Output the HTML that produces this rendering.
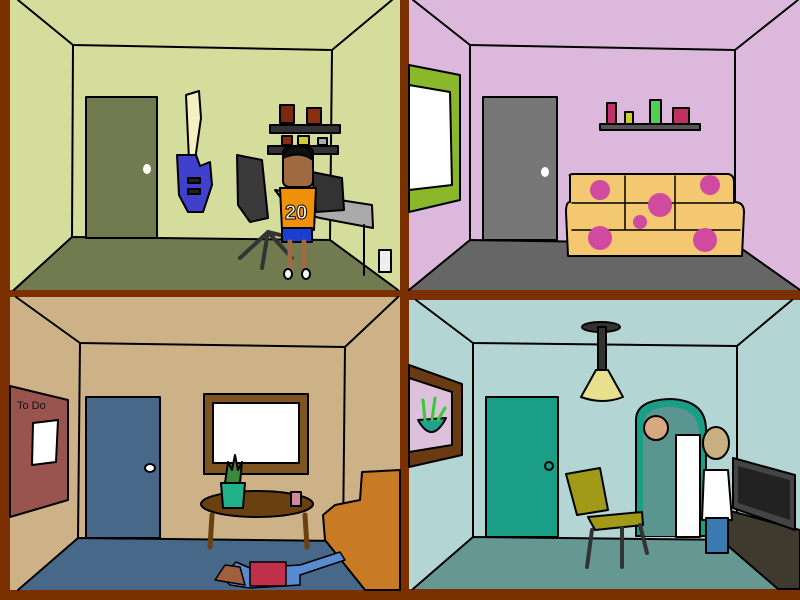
<!DOCTYPE html>
<html><head><style>html,body{margin:0;padding:0;background:#7a3000;}svg{display:block}</style></head><body>
<svg width="800" height="600" viewBox="0 0 800 600" xmlns="http://www.w3.org/2000/svg" stroke="#000" stroke-width="2" stroke-linejoin="round" stroke-linecap="round">
<rect width="800" height="600" fill="#7a3000" stroke="none"/>
<!-- TL -->
<g>
<rect x="10" y="0" width="390" height="290" fill="#d4dd9c" stroke="none"/>
<polygon points="72,237 332,240 398,290 12,290" fill="#727a4f" stroke="none"/>
<polyline points="18,0 73,45 332,50 392,0" fill="none"/>
<line x1="73" y1="45" x2="72" y2="237"/><line x1="332" y1="50" x2="330" y2="240"/>
<polyline points="14,290 72,237 330,240 398,290" fill="none"/>
<rect x="86" y="97" width="71" height="141" fill="#727a4f"/>
<ellipse cx="147" cy="169" rx="4" ry="5" fill="#fff" stroke="none"/>
<path d="M186 95 L199 91 L201 118 L195 160 L189 160 Z" fill="#f6f0c0"/>
<path d="M190 155 L196 155 L200 166 L210 162 L212 185 L203 212 L188 212 L179 195 L177 155 Z" fill="#4040cc"/>
<rect x="188" y="178" width="12" height="5" fill="#222"/><rect x="188" y="189" width="12" height="5" fill="#222"/>
<rect x="270" y="125" width="70" height="8" fill="#333"/><rect x="268" y="146" width="70" height="8" fill="#333"/>
<rect x="280" y="105" width="14" height="18" fill="#7a2a10"/><rect x="307" y="108" width="14" height="16" fill="#8a3010"/>
<rect x="282" y="136" width="10" height="9" fill="#8a2a10"/><rect x="298" y="136" width="11" height="9" fill="#cc3"/><rect x="318" y="138" width="9" height="7" fill="#aaa"/>
<path d="M237 155 L262 160 L268 218 L250 222 L238 205 Z" fill="#3a3a3a"/>
<path d="M268 232 L240 258 M268 232 L292 258 M268 232 L262 268 M268 232 L300 240" stroke="#333" stroke-width="4"/>
<path d="M275 190 L372 205 L373 228 L320 218 L290 210 Z" fill="#aaa"/>
<path d="M312 172 L342 178 L344 210 L316 212 Z" fill="#333"/>
<line x1="364" y1="225" x2="364" y2="275"/>
<rect x="379" y="250" width="12" height="22" fill="#eee"/>
<rect x="283" y="147" width="30" height="40" rx="6" fill="#a06a40"/>
<path d="M283 158 Q286 145 298 146 Q312 146 313 160 Q300 150 283 158Z" fill="#111"/>
<path d="M280 188 L316 188 L314 230 L282 230 Z" fill="#f0900a"/>
<text x="285" y="219" font-family="Liberation Sans,sans-serif" font-size="20" font-weight="bold" fill="#fff" stroke="#000" stroke-width="1">20</text>
<rect x="282" y="228" width="30" height="14" fill="#1a3fd0"/>
<line x1="290" y1="242" x2="290" y2="272" stroke="#a06a40" stroke-width="5"/><line x1="304" y1="242" x2="304" y2="272" stroke="#a06a40" stroke-width="5"/>
<ellipse cx="288" cy="274" rx="4" ry="5" fill="#fff"/><ellipse cx="306" cy="274" rx="4" ry="5" fill="#fff"/>
</g>
<!-- TR -->
<g>
<rect x="409" y="0" width="391" height="290" fill="#dcb8dc" stroke="none"/>
<polygon points="470,240 735,244 798,290 409,290" fill="#666" stroke="none"/>
<polyline points="413,0 470,45 735,50 798,0" fill="none"/>
<line x1="470" y1="45" x2="470" y2="240"/><line x1="735" y1="50" x2="735" y2="244"/>
<polyline points="409,290 470,240 735,244 800,290" fill="none"/>
<path d="M409 65 L460 75 L460 200 L409 212 Z" fill="#8ab82a"/>
<path d="M409 85 L450 92 L452 185 L409 190 Z" fill="#fff"/>
<rect x="483" y="97" width="74" height="143" fill="#777"/>
<ellipse cx="545" cy="172" rx="4" ry="5" fill="#fff" stroke="none"/>
<rect x="600" y="124" width="100" height="6" fill="#555"/>
<rect x="607" y="103" width="9" height="21" fill="#c0306a"/><rect x="625" y="112" width="8" height="12" fill="#cc3"/><rect x="650" y="100" width="11" height="24" fill="#5c5"/><rect x="673" y="108" width="16" height="16" fill="#c03060"/>
<path d="M570 176 Q568 174 575 174 L728 174 Q734 175 734 182 L734 202 Q744 202 744 212 L742 256 L568 256 L566 212 Q566 202 570 202 Z" fill="#f3c870"/>
<path d="M572 203 L734 203 M572 230 L740 230 M625 176 L625 230 M675 176 L675 230" fill="none" stroke-width="1.5"/>
<circle cx="600" cy="190" r="10" fill="#d04aa0" stroke="none"/><circle cx="660" cy="205" r="12" fill="#d04aa0" stroke="none"/><circle cx="710" cy="185" r="10" fill="#d04aa0" stroke="none"/><circle cx="600" cy="238" r="12" fill="#d04aa0" stroke="none"/><circle cx="705" cy="240" r="12" fill="#d04aa0" stroke="none"/><circle cx="640" cy="222" r="7" fill="#d04aa0" stroke="none"/>
</g>
<!-- BL -->
<g>
<rect x="10" y="297" width="390" height="293" fill="#cdb287" stroke="none"/>
<polygon points="78,538 345,541 400,590 18,590" fill="#476888" stroke="none"/>
<polyline points="16,297 80,343 345,347 398,297" fill="none"/>
<line x1="80" y1="343" x2="78" y2="538"/><line x1="345" y1="347" x2="343" y2="541"/>
<polyline points="18,590 78,538 343,541 398,590" fill="none"/>
<path d="M10 386 L68 400 L68 500 L10 517 Z" fill="#9a5450"/>
<text x="17" y="409" font-family="Liberation Sans,sans-serif" font-size="11" fill="#111" stroke="none">To Do</text>
<path d="M33 423 L58 420 L56 462 L32 465 Z" fill="#fff"/>
<rect x="86" y="397" width="74" height="141" fill="#476888"/>
<ellipse cx="150" cy="468" rx="5" ry="4" fill="#fff"/>
<rect x="204" y="394" width="104" height="80" fill="#7e5522"/>
<rect x="213" y="403" width="86" height="60" fill="#fff"/>
<ellipse cx="257" cy="504" rx="56" ry="13" fill="#6a4010"/>
<line x1="212" y1="515" x2="210" y2="547" stroke="#6a4010" stroke-width="5"/><line x1="305" y1="515" x2="307" y2="547" stroke="#6a4010" stroke-width="5"/>
<path d="M221 483 L245 483 L243 508 L223 508 Z" fill="#20b08a"/>
<path d="M225 483 L228 462 L232 470 L235 455 L238 470 L242 462 L240 483 Z" fill="#3a8a3a"/>
<rect x="291" y="492" width="10" height="14" fill="#d08898"/>
<path d="M335 505 L360 500 L362 472 L400 470 L400 590 L365 590 L325 540 L323 515 Z" fill="#c87a24"/>
<path d="M222 577 L236 562 L250 568 L300 565 L340 552 L345 560 L300 575 L300 585 L250 588 L230 585 Z" fill="#5a8ad0" stroke-width="1.5"/>
<rect x="250" y="562" width="36" height="24" fill="#c0304a" stroke-width="1.5"/>
<path d="M215 580 L225 565 L240 567 L245 585 Z" fill="#a06040" stroke-width="1.5"/>
</g>
<!-- BR -->
<g>
<rect x="409" y="300" width="391" height="289" fill="#b3d5d3" stroke="none"/>
<polygon points="473,537 740,540 778,589 413,589" fill="#659893" stroke="none"/>
<polyline points="416,300 473,343 737,346 792,300" fill="none"/>
<line x1="473" y1="343" x2="473" y2="537"/><line x1="737" y1="346" x2="737" y2="540"/>
<polyline points="413,589 473,537 740,540" fill="none"/>
<path d="M409 365 L462 384 L462 455 L409 467 Z" fill="#6a3a12"/>
<path d="M409 378 L452 392 L452 445 L409 452 Z" fill="#dcc0dc"/>
<path d="M418 420 Q432 445 446 418 Z" fill="#20a090"/>
<path d="M425 420 L423 400 M432 420 L435 398 M438 420 L445 408" stroke="#3c3" stroke-width="3"/>
<rect x="486" y="397" width="72" height="140" fill="#1a9e86"/>
<circle cx="549" cy="466" r="4" fill="#1a9e86"/>
<ellipse cx="601" cy="327" rx="19" ry="5" fill="#333"/>
<rect x="598" y="327" width="8" height="45" fill="#333"/>
<path d="M596 370 L608 370 L623 397 Q603 405 581 397 Z" fill="#e8e08c"/>
<path d="M636 536 L636 420 Q636 400 670 399 Q706 400 706 430 L706 536 Z" fill="#1a9e86"/>
<path d="M643 536 L643 425 Q645 407 670 407 Q698 408 699 432 L699 536 Z" fill="#5a9590" stroke="none"/>
<circle cx="656" cy="428" r="12" fill="#d8a880"/>
<rect x="676" y="435" width="24" height="102" fill="#fff"/>
<path d="M566 474 L600 468 L608 510 L577 515 Z" fill="#a09a18"/>
<path d="M588 517 L642 512 L643 525 L595 530 Z" fill="#a09a18"/>
<line x1="592" y1="530" x2="587" y2="567" stroke="#333" stroke-width="4"/><line x1="622" y1="528" x2="622" y2="567" stroke="#333" stroke-width="4"/><line x1="640" y1="525" x2="647" y2="553" stroke="#333" stroke-width="4"/>
<path d="M727 510 L800 530 L800 589 L778 589 L727 545 Z" fill="#3f3a2e"/>
<path d="M733 458 L795 475 L795 530 L733 508 Z" fill="#444"/>
<path d="M738 466 L790 480 L790 520 L738 503 Z" fill="#222" stroke="none"/>
<ellipse cx="716" cy="443" rx="13" ry="16" fill="#c8b080"/>
<path d="M704 470 L728 470 L732 520 L702 520 Z" fill="#fff"/>
<rect x="706" y="518" width="22" height="35" fill="#3a7ab0"/>
</g>
</svg>
</body></html>
